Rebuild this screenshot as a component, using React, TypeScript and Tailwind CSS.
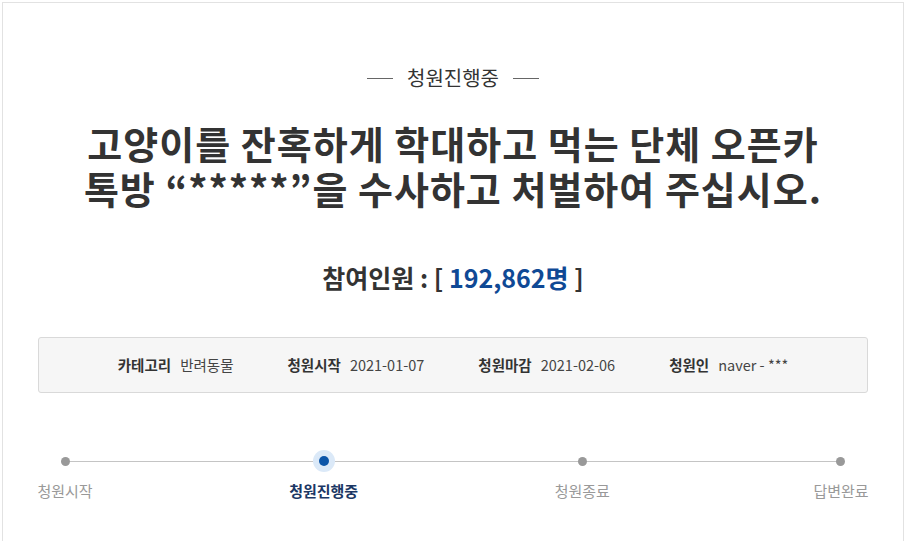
import React from "react";

const font = { fontFamily: '"Noto Sans CJK KR", "Noto Sans", sans-serif' };

const info = [
  { label: "카테고리", value: "반려동물" },
  { label: "청원시작", value: "2021-01-07" },
  { label: "청원마감", value: "2021-02-06" },
  { label: "청원인", value: "naver - ***" },
];

const steps = [
  { label: "청원시작", active: false },
  { label: "청원진행중", active: true },
  { label: "청원종료", active: false },
  { label: "답변완료", active: false },
];

export default function App() {
  return (
    <div className="min-h-[541px] bg-white pt-[2px] pl-[2px]" style={font}>
      <div className="w-[902px] min-h-[560px] border border-[#e2e2e2] px-[35px] pt-[61px]">
        <div className="flex items-center justify-center gap-[14px]">
          <span className="block h-px w-[26px] bg-[#666]" />
          <span className="text-[20px] leading-[28px] text-[#333]">청원진행중</span>
          <span className="block h-px w-[26px] bg-[#666]" />
        </div>

        <h1 className="mt-[28px] whitespace-nowrap text-center text-[38px] font-bold tracking-[1px] text-[#333]">
          <div className="h-[45px] leading-[45px]">고양이를 잔혹하게 학대하고 먹는 단체 오픈카</div>
          <div className="h-[45px] leading-[45px]">톡방 “*****”을 수사하고 처벌하여 주십시오.</div>
        </h1>

        <div className="mt-[50px] text-center text-[25px] font-bold leading-[34px] text-[#333]">
          참여인원 : [ <span className="text-[#0f4995]">192,862명</span> ]
        </div>

        <div className="mt-[43px] flex h-[56px] items-center justify-center gap-[54px] rounded-[3px] border border-[#d9d9d9] bg-[#f6f6f6] text-[#333]">
          {info.map((item) => (
            <div key={item.label} className="flex items-center gap-[9px]">
              <span className="text-[14.5px] font-bold">{item.label}</span>
              <span className="text-[14.5px] text-[#444]">{item.value}</span>
            </div>
          ))}
        </div>

        <div className="relative mt-[57px] flex justify-between">
          <div className="absolute left-[26px] right-[28px] top-[11px] h-px bg-[#c4c4c4]" />
          {steps.map((step) => (
            <div key={step.label} className="relative flex w-[54px] flex-col items-center">
              <div className="flex h-[22px] w-[22px] items-center justify-center">
                {step.active ? (
                  <div className="flex h-[22px] w-[22px] items-center justify-center rounded-full bg-[#dbe9f8]">
                    <div className="h-[10px] w-[10px] rounded-full bg-[#0b55a8]" />
                  </div>
                ) : (
                  <div className="h-[9px] w-[9px] rounded-full bg-[#999]" />
                )}
              </div>
              <span
                className={`mt-[9px] whitespace-nowrap text-[15px] leading-[20px] ${
                  step.active ? "font-bold text-[#1b3764]" : "text-[#999]"
                }`}
              >
                {step.label}
              </span>
            </div>
          ))}
        </div>
      </div>
    </div>
  );
}
